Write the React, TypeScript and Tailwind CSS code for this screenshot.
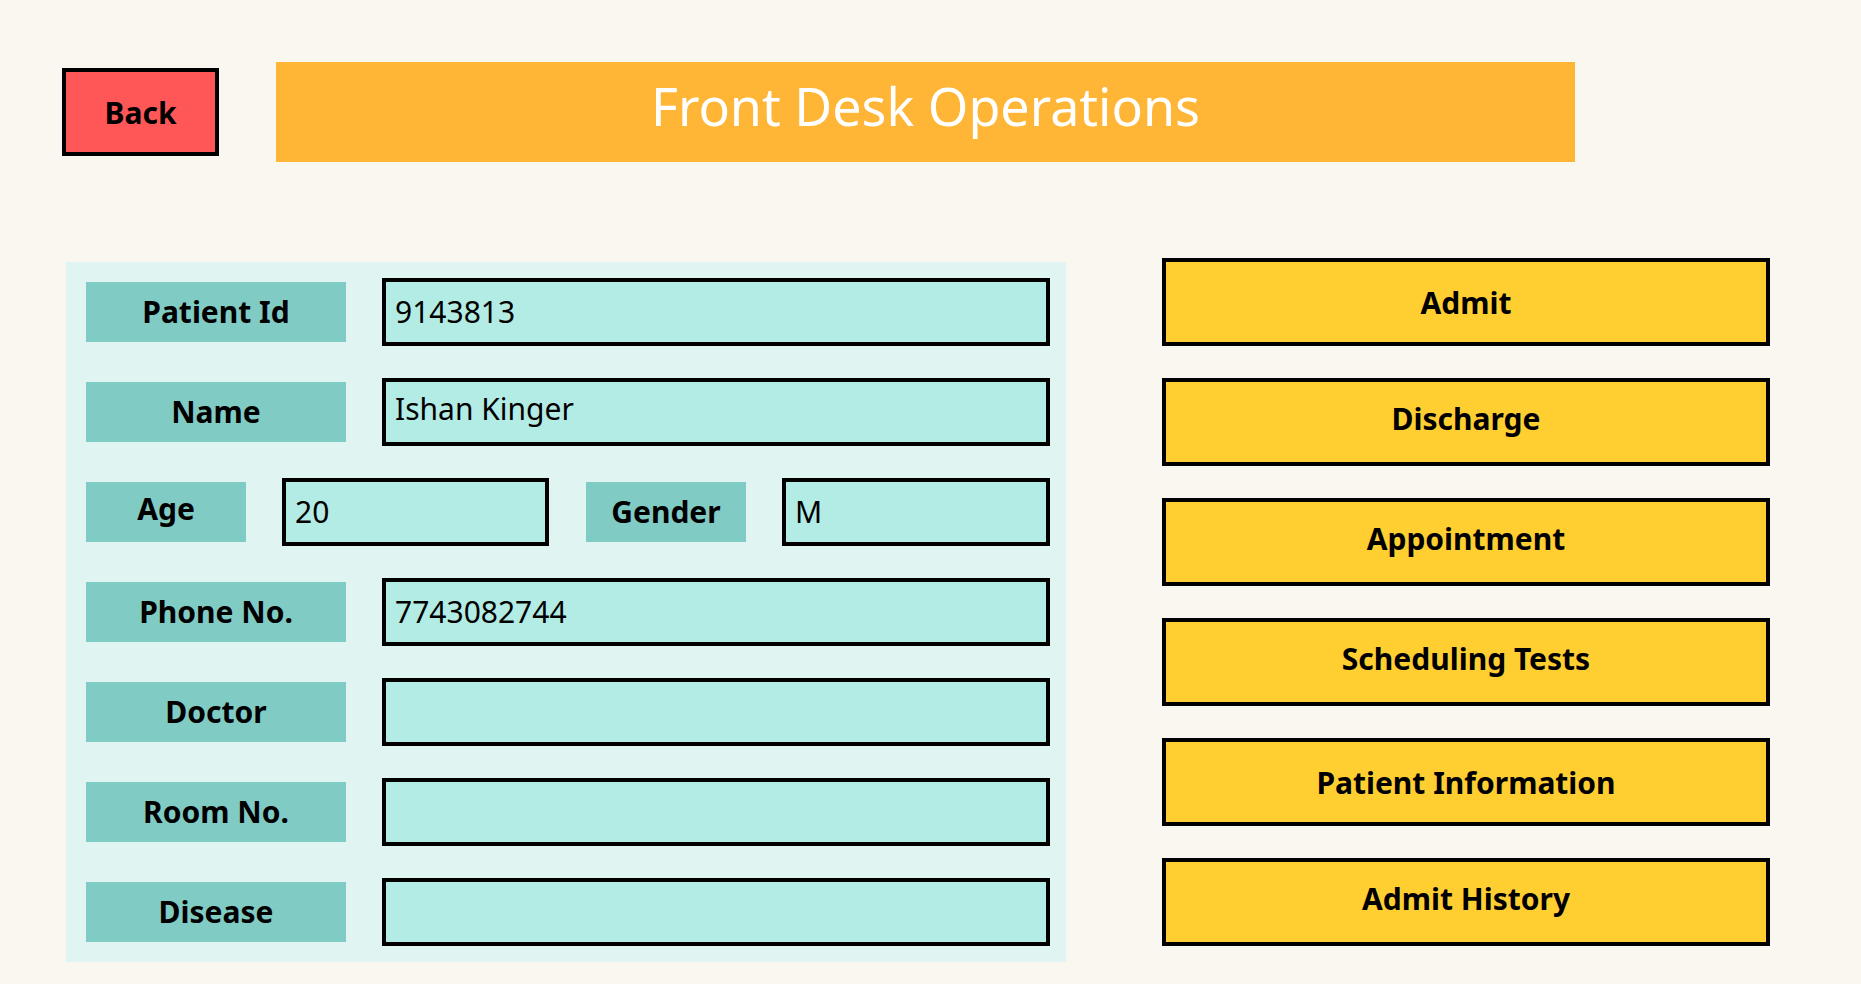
import React from "react";

const font = { fontFamily: '"Noto Sans", "Open Sans", sans-serif' };

function Label({ children, w = "w-[260px]", extra = "pb-[2px]" }: { children: React.ReactNode; w?: string; extra?: string }) {
  return (
    <div className={`${w} h-[60px] shrink-0 bg-[#80cbc4] flex items-center justify-center text-[30px] font-bold text-black ${extra}`}>
      {children}
    </div>
  );
}

function Field({ value, w = "flex-1", extra = "pb-[2px]" }: { value: string; w?: string; extra?: string }) {
  return (
    <input
      readOnly
      defaultValue={value}
      className={`${w} min-w-0 h-[68px] border-4 border-black bg-[#b3ebe5] pl-[9px] text-[30px] text-black outline-none ${extra}`}
    />
  );
}

function Row({ label, value, fieldExtra }: { label: string; value: string; fieldExtra?: string }) {
  return (
    <div className="flex items-center h-[68px] gap-[36px]">
      <Label>{label}</Label>
      <Field value={value} extra={fieldExtra} />
    </div>
  );
}

const actions: { t: string; c: string }[] = [
  { t: "Admit", c: "pb-[0px]" },
  { t: "Discharge", c: "pb-[7px]" },
  { t: "Appointment", c: "pb-[7px]" },
  { t: "Scheduling Tests", c: "pb-[7px]" },
  { t: "Patient Information", c: "pb-[0px]" },
  { t: "Admit History", c: "pb-[7px]" },
];

export default function App() {
  return (
    <div className="min-h-screen w-full bg-[#faf7f0] px-[62px] pt-[62px]" style={font}>
      <div className="flex items-start gap-[57px]">
        <button className="mt-[6px] w-[157px] h-[88px] border-4 border-black bg-[#ff5757] text-[30px] font-bold text-black flex items-center justify-center">
          Back
        </button>
        <div className="w-[1299px] h-[100px] bg-[#ffb536] flex items-center justify-center pb-[12px] text-[52px] text-white">
          Front Desk Operations
        </div>
      </div>

      <div className="flex items-start mt-[96px] gap-[96px]">
        <div className="ml-[4px] mt-[4px] w-[1000px] bg-[#e0f5f2] pt-[16px] pb-[16px] pl-[20px] pr-[16px] flex flex-col gap-[32px]">
          <Row label="Patient Id" value="9143813" />
          <Row label="Name" value="Ishan Kinger" fieldExtra="pb-[7px]" />
          <div className="flex items-center h-[68px]">
            <Label w="w-[160px]" extra="pb-[8px]">Age</Label>
            <div className="w-[36px] shrink-0" />
            <Field value="20" w="w-[267px]" />
            <div className="w-[37px] shrink-0" />
            <Label w="w-[160px]">Gender</Label>
            <div className="w-[36px] shrink-0" />
            <Field value="M" w="w-[268px]" />
          </div>
          <Row label="Phone No." value="7743082744" />
          <Row label="Doctor" value="" />
          <Row label="Room No." value="" />
          <Row label="Disease" value="" />
        </div>

        <div className="flex flex-col gap-[32px]">
          {actions.map((a) => (
            <button
              key={a.t}
              className={`w-[608px] h-[88px] border-4 border-black bg-[#ffce31] text-[30px] font-bold text-black flex items-center justify-center ${a.c}`}
            >
              {a.t}
            </button>
          ))}
        </div>
      </div>
    </div>
  );
}
